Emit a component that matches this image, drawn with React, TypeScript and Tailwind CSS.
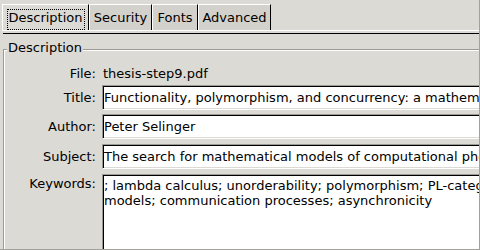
const tabs = [
  { label: 'Description', width: 'w-[87px]', active: true },
  { label: 'Security', width: 'w-[63px]', active: false },
  { label: 'Fonts', width: 'w-[46px]', active: false },
  { label: 'Advanced', width: 'w-[73px]', active: false },
];

// sunken line-edit frame: grey/black top-left, light/white bottom-right
const fieldFrame =
  'flex-1 bg-white border border-t-[#9c9a95] border-l-[#9c9a95] border-b-white border-r-white shadow-[inset_1px_1px_0_#000,inset_-1px_-1px_0_#dcdad5] overflow-hidden whitespace-nowrap';

function Field({ label, value }: { label: string; value: string }) {
  return (
    <div className="flex items-center gap-[6px]">
      <span className="w-[92px] shrink-0 text-right">{label}</span>
      <div className={`${fieldFrame} flex h-[25px] items-center pl-[1px]`}>{value}</div>
    </div>
  );
}

export default function App() {
  return (
    <div className="relative h-[250px] w-[480px] overflow-hidden border-r border-b border-[#a3a19c] bg-[#dcdad5] font-['DejaVu_Sans',sans-serif] text-[13px] leading-[15px] text-black">
      {/* tab bar */}
      <div className="flex h-[30px] pl-[2px] pt-[4px]">
        {tabs.map((t) => (
          <div
            key={t.label}
            className={`flex h-[26px] ${t.width} justify-center border-l border-t border-r border-l-white border-t-white border-r-black ${
              t.active ? 'bg-[#dcdad5] pt-[4px]' : 'bg-[#d3d1cc] pt-[5px]'
            }`}
          >
            {t.active ? (
              <span className="flex h-[21px] w-[78px] justify-center border border-dotted border-black">{t.label}</span>
            ) : (
              <span>{t.label}</span>
            )}
          </div>
        ))}
      </div>
      <div className="ml-[2px] h-px bg-white" />
      <div className="ml-[3px] mt-[2px] h-px bg-black" />

      {/* group box */}
      <div className="relative ml-[3px] mt-[15px] w-[540px] border-l border-t border-[#9c9a95] pt-[16px] shadow-[inset_1px_1px_0_#fff]">
        <span className="absolute -top-[10px] left-[3px] bg-[#dcdad5] px-[1px]">Description</span>

        <div className="flex gap-[6px]">
          <span className="w-[92px] shrink-0 text-right">File:</span>
          <span className="pl-[1px]">thesis-step9.pdf</span>
        </div>
        <div className="mt-[4px]">
          <Field label="Title:" value="Functionality, polymorphism, and concurrency: a mathematical investigation of programming paradigms" />
        </div>
        <div className="mt-[4px]">
          <Field label="Author:" value="Peter Selinger" />
        </div>
        <div className="mt-[5px]">
          <Field label="Subject:" value="The search for mathematical models of computational phenomena often leads to problems" />
        </div>
        <div className="mt-[5px] flex items-start gap-[6px]">
          <span className="mt-[2px] w-[92px] shrink-0 text-right">Keywords:</span>
          <div className={`${fieldFrame} h-[120px] pl-[1px] pt-[3px]`}>
            <div>; lambda calculus; unorderability; polymorphism; PL-categories; mathematical</div>
            <div>models; communication processes; asynchronicity</div>
          </div>
        </div>
      </div>
    </div>
  );
}
